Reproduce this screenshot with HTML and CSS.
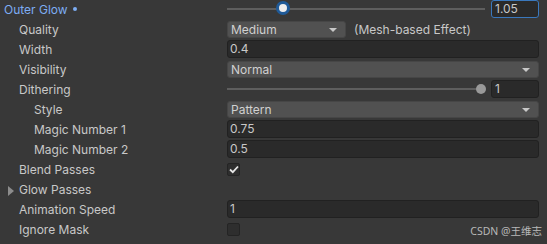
FILE: index.html
```html
<!DOCTYPE html>
<html>
<head>
<meta charset="utf-8">
<link rel="stylesheet" href="styles.css">
</head>
<body>
<div class="inspector">
  <div class="row">
    <div class="label lv0 blue">Outer Glow <span class="dot"></span></div>
    <div class="field">
      <div class="slider">
        <div class="track"></div>
        <div class="knob active" style="left:56px"></div>
      </div>
      <div class="num focus">1.05</div>
    </div>
  </div>
  <div class="row">
    <div class="label lv1">Quality</div>
    <div class="field">
      <div class="dropdown short">Medium<span class="arrow"></span></div>
      <span class="note">(Mesh-based Effect)</span>
    </div>
  </div>
  <div class="row">
    <div class="label lv1">Width</div>
    <div class="field"><div class="text">0.4</div></div>
  </div>
  <div class="row">
    <div class="label lv1">Visibility</div>
    <div class="field"><div class="dropdown">Normal<span class="arrow"></span></div></div>
  </div>
  <div class="row">
    <div class="label lv1">Dithering</div>
    <div class="field">
      <div class="slider">
        <div class="track"></div>
        <div class="knob" style="left:254px"></div>
      </div>
      <div class="num">1</div>
    </div>
  </div>
  <div class="row">
    <div class="label lv2">Style</div>
    <div class="field"><div class="dropdown">Pattern<span class="arrow"></span></div></div>
  </div>
  <div class="row">
    <div class="label lv2">Magic Number 1</div>
    <div class="field"><div class="text">0.75</div></div>
  </div>
  <div class="row">
    <div class="label lv2">Magic Number 2</div>
    <div class="field"><div class="text">0.5</div></div>
  </div>
  <div class="row">
    <div class="label lv1">Blend Passes</div>
    <div class="field"><div class="check on"><svg width="10" height="9" viewBox="0 0 10 9"><path d="M1 4.5 L3.8 7.2 L9 1.5" fill="none" stroke="#e6e6e6" stroke-width="1.8"/></svg></div></div>
  </div>
  <div class="row">
    <div class="label lv1 foldout"><span class="tri"></span>Glow Passes</div>
    <div class="field"></div>
  </div>
  <div class="row">
    <div class="label lv1">Animation Speed</div>
    <div class="field"><div class="text">1</div></div>
  </div>
  <div class="row">
    <div class="label lv1">Ignore Mask</div>
    <div class="field"><div class="check"></div></div>
  </div>
</div>
<div class="watermark">CSDN @王维志</div>
</body>
</html>
```
FILE: styles.css
```css
html, body {
  margin: 0;
  padding: 0;
  background: #383838;
  width: 547px;
  height: 244px;
  overflow: hidden;
  font-family: Inter, "Noto Sans", "Noto Sans CJK SC", sans-serif;
  font-size: 12px;
  color: #c8c8c8;
}
.inspector {
  display: flex;
  flex-direction: column;
  padding-right: 8px;
  margin-top: -1px;
}
.row {
  display: flex;
  align-items: center;
  height: 20px;
}
.label {
  width: 227px;
  flex: none;
  box-sizing: border-box;
  white-space: nowrap;
  display: flex;
  align-items: center;
}
.lv0 { padding-left: 4px; }
.lv1 { padding-left: 19px; }
.lv2 { padding-left: 34px; }
.blue { color: #7dadf3; }
.dot {
  display: inline-block;
  width: 4px;
  height: 4px;
  border-radius: 50%;
  background: #7dadf3;
  margin-left: 5px;
}
.foldout { position: relative; }
.tri {
  position: absolute;
  left: 8px;
  top: 4px;
  width: 0;
  height: 0;
  border-top: 5px solid transparent;
  border-bottom: 5px solid transparent;
  border-left: 6px solid #8c8c8c;
}
.field {
  flex: 1;
  display: flex;
  align-items: center;
  height: 18px;
}
.slider {
  position: relative;
  flex: 1;
  height: 18px;
  margin-right: 6px;
}
.track {
  position: absolute;
  left: 0;
  right: 0;
  top: 8px;
  height: 2px;
  background: #5e5e5e;
}
.knob {
  position: absolute;
  top: 4px;
  width: 10px;
  height: 10px;
  margin-left: -5px;
  border-radius: 50%;
  background: #999999;
}
.knob.active {
  top: 1px;
  width: 8px;
  height: 8px;
  margin-left: -7px;
  background: #eeeeee;
  border: 3px solid #1f5a98;
}
.num {
  width: 48px;
  height: 18px;
  box-sizing: border-box;
  background: #2a2a2a;
  border: 1px solid #212121;
  border-radius: 3px;
  padding-left: 3px;
  line-height: 16px;
}
.num.focus {
  border-color: #3a78bd;
  margin-top: -1px;
}
.text {
  flex: 1;
  height: 18px;
  box-sizing: border-box;
  background: #2a2a2a;
  border: 1px solid #212121;
  border-radius: 3px;
  padding-left: 2px;
  line-height: 16px;
}
.dropdown {
  position: relative;
  flex: 1;
  height: 17px;
  box-sizing: border-box;
  background: #515151;
  border: 1px solid #464646;
  border-radius: 3px;
  padding-left: 3px;
  line-height: 15px;
  color: #d0d0d0;
}
.dropdown.short {
  flex: none;
  width: 119px;
}
.arrow {
  position: absolute;
  right: 8px;
  top: 6px;
  width: 0;
  height: 0;
  border-left: 4px solid transparent;
  border-right: 4px solid transparent;
  border-top: 4px solid #c8c8c8;
}
.note {
  margin-left: 8px;
}
.check {
  width: 13px;
  height: 13px;
  box-sizing: border-box;
  background: #2e2e2e;
  border: 1px solid #242424;
  border-radius: 2px;
  display: flex;
  align-items: center;
  justify-content: center;
}
.watermark {
  position: absolute;
  right: 5px;
  top: 223px;
  font-size: 10.5px;
  color: #b8b8b8;
  font-family: "Noto Sans", "Noto Sans CJK SC", sans-serif;
}
```
